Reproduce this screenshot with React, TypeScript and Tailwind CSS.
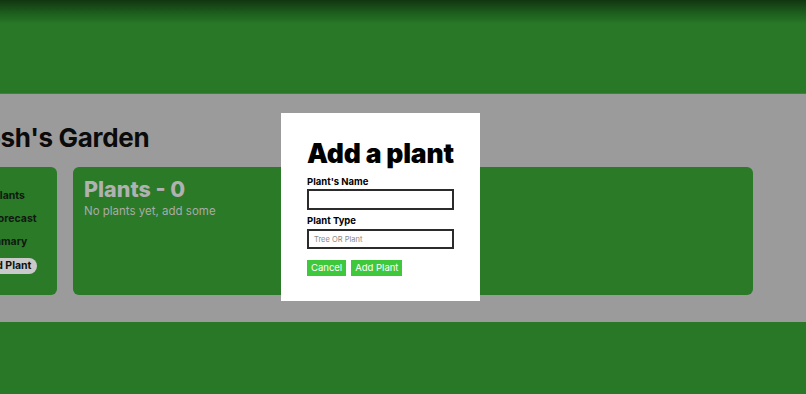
import React from 'react';

const sideItems = [
  { label: 'Plants', offset: 'ml-0' },
  { label: 'Forecast', offset: '-ml-[1px]' },
  { label: 'Summary', offset: '-ml-[15px]' },
];

const AddPlantModal: React.FC = () => (
  <div className="absolute left-[281px] top-[19px] w-[199px] h-[188px] bg-white pl-[26px] pr-[10px] pt-[25px]">
    <h2 className="text-[26.5px] leading-[30px] font-black text-black whitespace-nowrap tracking-[-0.2px]">Add a plant</h2>
    <label className="block mt-[8px] text-[9.5px] leading-[12px] font-bold text-black">Plant's Name</label>
    <input className="block mt-[1px] w-[147px] h-[21px] border-2 border-[#2b2b2b] bg-white outline-none" />
    <label className="block mt-[5px] text-[9.5px] leading-[12px] font-bold text-black">Plant Type</label>
    <input
      placeholder="Tree OR Plant"
      className="block mt-[2px] w-[147px] h-[20px] border-2 border-[#2b2b2b] bg-white px-[5px] text-[7.5px] placeholder:text-[#8a8a8a] outline-none"
    />
    <div className="flex gap-[5px] mt-[11px]">
      <button className="h-[16px] px-[4px] bg-[#3fc83c] text-white text-[9.5px] leading-[16px]">Cancel</button>
      <button className="h-[16px] px-[4px] bg-[#3fc83c] text-white text-[9.5px] leading-[16px]">Add Plant</button>
    </div>
  </div>
);

export default function App() {
  return (
    <div className="w-[806px] h-[394px] overflow-hidden bg-[#287828] font-['Inter',sans-serif]">
      <header className="h-[94px] bg-[linear-gradient(to_bottom,#113611_0px,#1c5a1c_12px,#287828_24px,#287828_100%)] border-b border-[#3a8638]" />
      <main className="relative h-[228px] bg-[#9b9b9b] pt-[28px]">
        <div className="-ml-[30px] flex flex-col">
          <h1 className="text-[26px] leading-[32px] font-bold text-[#0b0b0b] tracking-[-0.3px]">Josh's Garden</h1>
          <div className="flex gap-[16px] mt-[13px] mr-[53px]">
            <nav className="w-[87px] h-[128px] shrink-0 rounded-[6px] bg-[#2a7a28] pl-[23px] pt-[21px] flex flex-col items-start gap-[8px]">
              {sideItems.map((item) => (
                <span
                  key={item.label}
                  className={`${item.offset} text-[10.5px] leading-[15px] font-bold text-[#101810] whitespace-nowrap`}
                >
                  {item.label}
                </span>
              ))}
              <span className="-ml-[17px] mt-[1px] h-[16px] px-[6px] rounded-full bg-[#cacaca] text-[10.5px] leading-[16px] font-bold text-[#101010] whitespace-nowrap">
                Add Plant
              </span>
            </nav>
            <section className="flex-1 h-[128px] rounded-[6px] bg-[#2a7a28] px-[11px] pt-[9px]">
              <h3 className="text-[21.5px] leading-[26px] font-extrabold text-[#b1b1b1]">Plants - 0</h3>
              <p className="mt-[2px] text-[11.5px] leading-[14px] text-[#aaaaaa]">No plants yet, add some</p>
            </section>
          </div>
        </div>
        <AddPlantModal />
      </main>
    </div>
  );
}
